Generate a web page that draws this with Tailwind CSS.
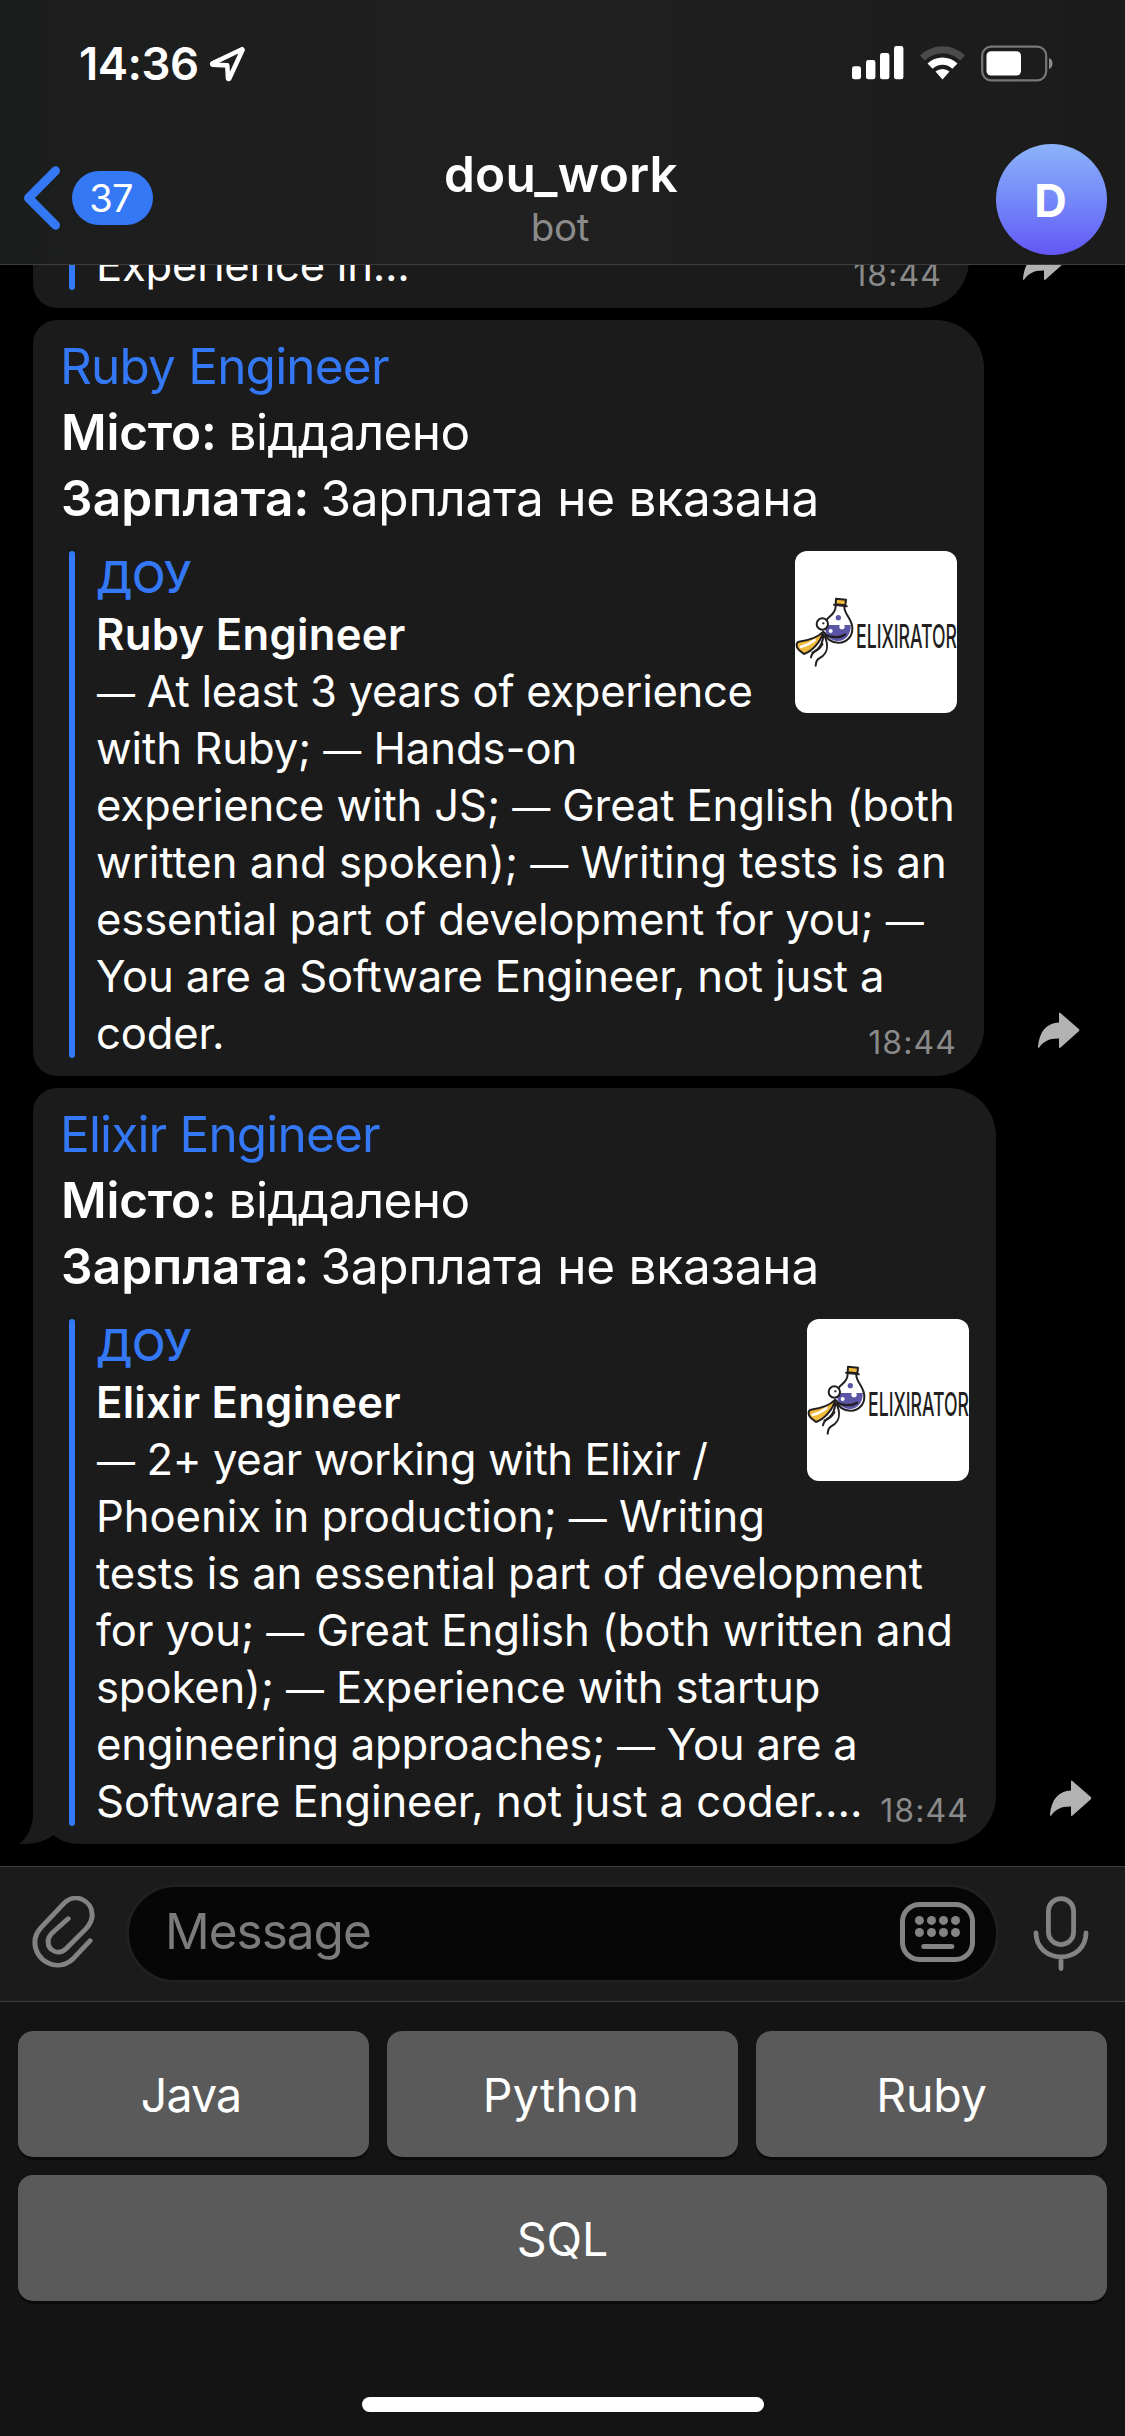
<!DOCTYPE html>
<html lang="uk">
<head>
<meta charset="utf-8">
<title>dou_work</title>
<script src="https://cdn.jsdelivr.net/npm/@tailwindcss/browser@4"></script>
</head>
<body class="bg-black">
<svg class="hidden" aria-hidden="true">
  <symbol id="share" viewBox="0 0 42 37">
    <path d="M21 1.6Q21 0 22.4 1L40.8 17Q41.9 18 40.8 19.2L22.6 35.6Q21 36.6 21 35V26.4C11 26.2 5 29.5 1.2 35.6Q0 36.8 0 34.6C1.4 19.5 8 11 21 10.4Z" fill="#b2b2b2"/>
  </symbol>
  <symbol id="elixirator" viewBox="0 0 162 162">
    <rect width="162" height="162" fill="#fff"/>
    <g transform="translate(-15 -11) scale(.33333)" fill="none" stroke="#231f20" stroke-width="6" stroke-linecap="round" stroke-linejoin="round">
      <path d="M136 255H212C214 285 194 304 172 303C152 302 139 289 136 270Z" fill="#5b55a6" stroke="none"/>
      <path d="M168 176L198 179L196 196L167 193Z" fill="#f0bb3c"/>
      <path d="M162 194L200 199"/>
      <path d="M167 198C167 224 146 228 138 242"/>
      <path d="M193 200C192 224 217 235 217 266C217 292 197 309 175 308C152 307 139 296 134 278"/>
      <circle cx="175" cy="233" r="8" fill="#5b55a6" stroke="none"/>
      <circle cx="186" cy="260" r="8" fill="#fff" stroke="none"/>
      <circle cx="152" cy="273" r="6" fill="#fff" stroke="none"/>
      <path d="M137 284C154 294 180 294 195 284" stroke-width="7"/>
      <path d="M130 275C112 293 82 302 57 305C47 308 48 321 56 329L72 342C96 334 121 308 130 275Z" fill="#f0bb3c"/>
      <path d="M62 321C80 316 93 309 104 300" stroke="#fff" stroke-width="7"/>
      <path d="M130 284C129 305 124 318 112 328C101 336 95 338 93 352"/>
      <path d="M134 288C147 318 141 341 122 352C111 359 108 363 107 377"/>
      <path d="M128 312C118 330 108 335 97 337" stroke-width="5"/>
      <circle cx="127" cy="252" r="17" fill="#fff"/>
      <circle cx="130" cy="250" r="3.5" fill="#231f20" stroke="none"/>
    </g>
    <text x="61" y="97.3" font-family="Inter, sans-serif" font-size="32" font-weight="500" fill="#231f20" textLength="101" lengthAdjust="spacingAndGlyphs">ELIXIRATOR</text>
  </symbol>
</svg>

<div class="flex h-[2436px] w-[1125px] flex-col overflow-hidden bg-black font-[Inter,sans-serif] text-white">

  <!-- Status bar and chat header -->
  <header class="h-[265px] shrink-0 border-b border-[#3d3d3d] bg-linear-to-r from-[#1c1d1d] via-[#202020] to-[#1b1b1b]">
    <div class="flex h-[132px] justify-between pt-[33px] pr-[72px] pl-[79px]">
      <div class="flex h-[60px] items-center gap-[10px]">
        <span class="pt-[2px] text-[45.5px] leading-[60px] font-semibold tracking-[-0.5px]">14:36</span>
        <svg class="mt-px h-[36px] w-[37px]" viewBox="0 0 37 36" fill="none" stroke="#fff" stroke-width="4.6" stroke-linejoin="round"><path d="M33 3.2L3.5 17.4Q2.6 18.4 4 18.8L18.3 19.4L19 32.4Q19.6 33.6 20.4 32.4L33.6 3.8Z"/></svg>
      </div>
      <div class="flex h-[60px] items-center">
        <svg class="h-[34px] w-[52px]" viewBox="0 0 52 34" fill="#fff"><rect y="20.3" width="9" height="13" rx="2.4"/><rect x="14" y="14" width="9.4" height="19.3" rx="2.4"/><rect x="28" y="7" width="9.4" height="26.3" rx="2.4"/><rect x="42" width="9.4" height="33.3" rx="2.4"/></svg>
        <svg class="ml-4 h-[34px] w-[45px]" viewBox="0 0 45 34"><path d="M0 9.6A32 32 0 0 1 45 9.6L40.2 14.6A25 25 0 0 0 4.8 14.6Z" fill="#4b4b4b"/><path d="M7.5 17.6A21.4 21.4 0 0 1 37.5 17.6L32.3 22.8A14 14 0 0 0 12.7 22.8Z" fill="#fff"/><path d="M15.5 25.6A10.4 10.4 0 0 1 29.5 25.6L22.5 33.4Z" fill="#fff"/></svg>
        <svg class="ml-4 h-[37px] w-[72px]" viewBox="0 0 72 37"><rect x="1.2" y="1.7" width="64" height="33.6" rx="9" fill="none" stroke="#777" stroke-width="2.2"/><rect x="5.5" y="6.2" width="34.5" height="24.4" rx="4.5" fill="#fff"/><path d="M68 13Q71.5 14.4 71.5 18.5T68 24Z" fill="#8a8a8a"/></svg>
      </div>
    </div>
    <div class="grid h-[132px] grid-cols-[1fr_auto_1fr]">
      <div class="flex h-[132px] items-center pl-[23px]">
        <svg class="h-[64px] w-[38px]" viewBox="0 0 38 64" fill="none" stroke="#3478f6" stroke-width="9" stroke-linecap="round" stroke-linejoin="round"><path d="M32.5 4.8L5.5 32L32.5 59.2"/></svg>
        <span class="ml-[11px] flex h-[54px] w-[81px] items-center justify-center rounded-full bg-[#3478f6] pr-[3px] text-[38px] tracking-[-0.8px]">37</span>
      </div>
      <div class="pt-3 pr-[3px] text-center">
        <h1 class="text-[49.5px] leading-[60px] font-semibold tracking-[0.18px]">dou_work</h1>
        <p class="pr-[2px] text-[38.5px] leading-[46px] tracking-[-0.33px] text-[#8b8b8b]">bot</p>
      </div>
      <div class="flex justify-end pt-3 pr-[18px]">
        <div class="flex size-[111px] items-center justify-center rounded-full bg-linear-to-b from-[#8cb3f9] to-[#6356f6] pt-[2px] pr-[2px] text-[45px] font-bold">D</div>
      </div>
    </div>
  </header>

  <!-- Messages -->
  <main class="flex h-[1601px] shrink-0 flex-col justify-end gap-3 overflow-hidden pb-[22px] pl-[33px]">
    <article class="flex items-end">
      <div class="relative w-[936px] rounded-l-[24px] rounded-r-[48px] bg-[#1b1b1b] px-[27px] pt-12 pb-[14px]">
        <div class="flex">
          <div class="mb-1 ml-[9px] w-[6px] rounded-full bg-[#3478f6]"></div>
          <p class="ml-[21px] text-[43.6px] leading-[57px] tracking-[-0.24px]">Experience in...</p>
        </div>
        <time class="absolute right-[27px] bottom-[13px] text-[32px] leading-10 tracking-[1.1px] text-[#8a8a8a]">18:44</time>
      </div>
      <svg class="mb-[27px] ml-[54px] h-[37px] w-[42px]"><use href="#share"/></svg>
    </article>

    <article class="flex items-end">
      <div class="relative w-[951px] rounded-l-[24px] rounded-r-[48px] bg-[#1b1b1b] px-[27px] pt-[13px] pb-[14px]">
        <div class="text-[49.5px] leading-[66px] whitespace-nowrap">
          <p class="tracking-[-0.8px] text-[#3478f6]">Ruby Engineer</p>
          <p class="pl-px"><b class="font-semibold tracking-[-0.2px]">Місто:</b> <span class="-ml-[2px] tracking-[-0.56px]">віддалено</span></p>
          <p class="pl-px"><b class="font-semibold tracking-[0.18px]">Зарплата:</b> <span class="-ml-[3px] tracking-[-0.22px]">Зарплата не вказана</span></p>
        </div>
        <div class="mt-[18px] flex">
          <div class="mt-[2px] mb-1 ml-[9px] w-[6px] shrink-0 rounded-full bg-[#3478f6]"></div>
          <div class="ml-[21px] grow text-[43.6px] leading-[57px] whitespace-nowrap">
            <svg class="float-right mt-[2px] size-[162px] rounded-[12px]"><use href="#elixirator"/></svg>
            <p class="font-medium tracking-[-0.4px] text-[#3478f6]">ДОУ</p>
            <p class="font-semibold tracking-[0.32px]">Ruby Engineer</p>
            <p class="tracking-[-0.3px]"><span class="ml-[1px] text-[38px] leading-[38px]">—</span> At least 3 years of experience</p>
            <p class="tracking-[-0.07px]">with Ruby; <span class="text-[38px] leading-[38px]">—</span> Hands-on</p>
            <p class="tracking-[-0.12px]">experience with JS; <span class="text-[38px] leading-[38px]">—</span> Great English (both</p>
            <p>written and spoken); <span class="text-[38px] leading-[38px]">—</span> Writing tests is an</p>
            <p class="tracking-[-0.13px]">essential part of development for you; <span class="text-[38px] leading-[38px]">—</span></p>
            <p class="tracking-[-0.18px]">You are a Software Engineer, not just a</p>
            <p class="tracking-[-0.17px]">coder.</p>
          </div>
        </div>
        <time class="absolute right-[27px] bottom-[13px] text-[32px] leading-10 tracking-[1.1px] text-[#8a8a8a]">18:44</time>
      </div>
      <svg class="mb-[27px] ml-[54px] h-[37px] w-[42px]"><use href="#share"/></svg>
    </article>

    <article class="flex items-end">
      <div class="relative w-[963px] rounded-l-[24px] rounded-r-[48px] rounded-bl-none bg-[#1b1b1b] px-[27px] pt-[13px] pb-[14px]">
        <svg class="absolute bottom-0 -left-[14px] h-[30px] w-[62px]" viewBox="0 0 62 30"><path d="M14 0C14 12 9 23 0 30H16V0Z" fill="#1b1b1b"/><path d="M0 30C14 30.5 26 27.5 34.4 21C42 27.5 50 29.8 62 30Z" fill="#000"/></svg>
        <div class="text-[49.5px] leading-[66px] whitespace-nowrap">
          <p class="tracking-[-0.83px] text-[#3478f6]">Elixir Engineer</p>
          <p class="pl-px"><b class="font-semibold tracking-[-0.2px]">Місто:</b> <span class="-ml-[2px] tracking-[-0.56px]">віддалено</span></p>
          <p class="pl-px"><b class="font-semibold tracking-[0.18px]">Зарплата:</b> <span class="-ml-[3px] tracking-[-0.22px]">Зарплата не вказана</span></p>
        </div>
        <div class="mt-[18px] flex">
          <div class="mt-[2px] mb-1 ml-[9px] w-[6px] shrink-0 rounded-full bg-[#3478f6]"></div>
          <div class="ml-[21px] grow text-[43.6px] leading-[57px] whitespace-nowrap">
            <svg class="float-right mt-[2px] size-[162px] rounded-[12px]"><use href="#elixirator"/></svg>
            <p class="font-medium tracking-[-0.4px] text-[#3478f6]">ДОУ</p>
            <p class="font-semibold tracking-[0.26px]">Elixir Engineer</p>
            <p class="tracking-[-0.39px]"><span class="ml-[1px] text-[38px] leading-[38px]">—</span> 2+ year working with Elixir /</p>
            <p class="tracking-[-0.06px]">Phoenix in production; <span class="text-[38px] leading-[38px]">—</span> Writing</p>
            <p class="tracking-[-0.11px]">tests is an essential part of development</p>
            <p class="tracking-[-0.04px]">for you; <span class="text-[38px] leading-[38px]">—</span> Great English (both written and</p>
            <p class="tracking-[-0.15px]">spoken); <span class="text-[38px] leading-[38px]">—</span> Experience with startup</p>
            <p class="tracking-[-0.23px]">engineering approaches; <span class="text-[38px] leading-[38px]">—</span> You are a</p>
            <p class="tracking-[-0.08px]">Software Engineer, not just a coder....</p>
          </div>
        </div>
        <time class="absolute right-[27px] bottom-[13px] text-[32px] leading-10 tracking-[1.1px] text-[#8a8a8a]">18:44</time>
      </div>
      <svg class="mb-[27px] ml-[54px] h-[37px] w-[42px]"><use href="#share"/></svg>
    </article>
  </main>

  <!-- Composer -->
  <div class="flex h-[135px] shrink-0 items-start border-t border-[#3d3d3d] bg-[#1b1b1b] pt-[17px]">
    <svg class="mt-[12px] ml-[32px] h-[72px] w-[64px]" viewBox="0 0 64 72"><g transform="scale(.3584 .33333) translate(-90 -588)" fill="none" stroke="#838383" stroke-width="14" stroke-linecap="round" stroke-linejoin="round"><path d="M252 722L204 777C160 820 98 782 98 727C98 710 104 696 116 682L180 609C211 576 258 602 258 645C258 662 251 674 240 687L186 745C164 769 135 751 135 725C135 714 140 705 148 697L191 656"/></g></svg>
    <div class="ml-[30px] flex h-[99px] w-[873px] items-center justify-between rounded-full border-[3px] border-[#1f2020] bg-[#060606] pr-[21px] pl-[36px]">
      <span class="-mt-[5px] text-[49.5px] leading-[66px] tracking-[-1px] text-[#7b7b7b]">Message</span>
      <svg class="-mt-1 h-[60px] w-[75px]" viewBox="0 0 75 60" fill="#838383"><rect x="2.5" y="2.5" width="70" height="55" rx="17" fill="none" stroke="#838383" stroke-width="5"/><circle cx="19.4" cy="18.4" r="4.5"/><circle cx="31.5" cy="18.4" r="4.5"/><circle cx="43.5" cy="18.4" r="4.5"/><circle cx="55.5" cy="18.4" r="4.5"/><circle cx="19.4" cy="30.5" r="4.5"/><circle cx="31.5" cy="30.5" r="4.5"/><circle cx="43.5" cy="30.5" r="4.5"/><circle cx="55.5" cy="30.5" r="4.5"/><rect x="21.3" y="42" width="33" height="5" rx="2.5"/></svg>
    </div>
    <svg class="mt-3 ml-[34px] h-[76px] w-[56px]" viewBox="0 0 56 76" fill="none" stroke="#838383" stroke-width="4.8" stroke-linecap="round"><rect x="15.4" y="2.6" width="25.2" height="46" rx="12.6"/><path d="M3 37C3 51 14 60.8 28 60.8S53 51 53 37M28 61V72.6"/></svg>
  </div>

  <!-- Bot reply keyboard -->
  <div class="flex grow flex-col border-t border-[#3d3d3d] bg-[#141414] px-[18px] pt-[29px] text-[46.5px]">
    <div class="grid grid-cols-3 gap-[18px]">
      <button class="h-[126px] rounded-[15px] bg-[#5a5a5a] pt-[3px] pr-[5px] tracking-[-0.9px] shadow-[0_3px_0_#0b0b0b]">Java</button>
      <button class="h-[126px] rounded-[15px] bg-[#5a5a5a] pt-[3px] pr-[3px] tracking-[0.3px] shadow-[0_3px_0_#0b0b0b]">Python</button>
      <button class="h-[126px] rounded-[15px] bg-[#5a5a5a] pt-[3px] tracking-[-0.1px] shadow-[0_3px_0_#0b0b0b]">Ruby</button>
      <button class="col-span-3 h-[126px] rounded-[15px] bg-[#5a5a5a] pt-[3px] shadow-[0_3px_0_#0b0b0b]">SQL</button>
    </div>
    <div class="mx-auto mt-auto mb-[24px] h-[15px] w-[402px] rounded-full bg-white"></div>
  </div>
</div>
</body>
</html>
